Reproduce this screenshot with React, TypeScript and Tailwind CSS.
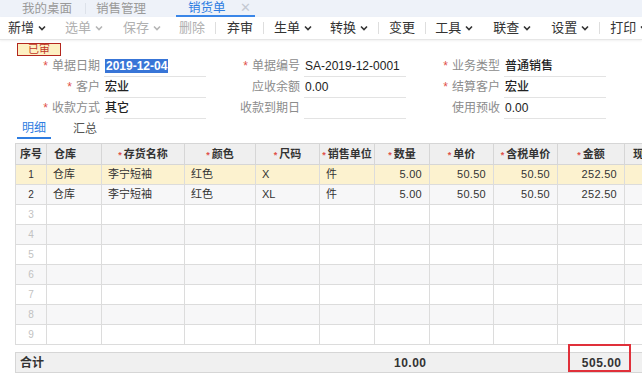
import { Fragment } from 'react'

const cols = [31, 55, 83, 71, 64, 55, 55, 64, 64, 67, 60]

const headers = [
  { label: '序号', req: false, align: 'text-center' },
  { label: '仓库', req: false, align: 'text-left pl-[7px]' },
  { label: '存货名称', req: true, align: 'text-center' },
  { label: '颜色', req: true, align: 'text-center' },
  { label: '尺码', req: true, align: 'text-center' },
  { label: '销售单位', req: true, align: 'text-center' },
  { label: '数量', req: true, align: 'text-center' },
  { label: '单价', req: true, align: 'text-center' },
  { label: '含税单价', req: true, align: 'text-center' },
  { label: '金额', req: true, align: 'text-center' },
  { label: '现存量', req: false, align: 'text-left pl-[8px]' },
]

const rows = [
  ['仓库', '李宁短袖', '红色', 'X', '件', '5.00', '50.50', '50.50', '252.50'],
  ['仓库', '李宁短袖', '红色', 'XL', '件', '5.00', '50.50', '50.50', '252.50'],
]

// toolbar: label, chevron, disabled, separator-before, left margin
const tools = [
  { label: '新增', chev: true, off: false, sep: false, ml: 'ml-[8px]' },
  { label: '选单', chev: true, off: true, sep: false, ml: 'ml-[19px]' },
  { label: '保存', chev: true, off: true, sep: false, ml: 'ml-[20px]' },
  { label: '删除', chev: false, off: true, sep: false, ml: 'ml-[18px]' },
  { label: '弃审', chev: false, off: false, sep: true, ml: 'ml-[11px]' },
  { label: '生单', chev: true, off: false, sep: true, ml: 'ml-[10px]' },
  { label: '转换', chev: true, off: false, sep: false, ml: 'ml-[18px]' },
  { label: '变更', chev: false, off: false, sep: true, ml: 'ml-[10px]' },
  { label: '工具', chev: true, off: false, sep: true, ml: 'ml-[9px]' },
  { label: '联查', chev: true, off: false, sep: false, ml: 'ml-[20px]' },
  { label: '设置', chev: true, off: false, sep: false, ml: 'ml-[20px]' },
  { label: '打印', chev: true, off: false, sep: true, ml: 'ml-[10px]' },
]

const Chevron = ({ muted }: { muted?: boolean }) => (
  <svg width="8" height="6" viewBox="0 0 8 6" className="ml-[4px] shrink-0">
    <path d="M1 1.5l3 3 3-3" fill="none" stroke={muted ? '#b5b5b5' : '#333'} strokeWidth="1.6" />
  </svg>
)

const FormField = ({
  label, value, req, bold, selected,
}: { label: string; value: string; req?: boolean; bold?: boolean; selected?: boolean }) => (
  <div className="flex w-[200px] shrink-0 items-stretch">
    <div className="w-[91px] whitespace-nowrap pr-[4px] text-right text-[12px] leading-[20px] text-[#8c8c8c]">
      {req && <span className="mr-[4px] text-[#e0504a]">*</span>}
      {label}
    </div>
    <div className="w-[102px] whitespace-nowrap border-b border-[#e3e3e3] pl-[1px] text-[12px] leading-[20px] text-[#222]">
      {selected ? (
        <span className="bg-[#3875d7] px-[1px] font-bold text-white">{value}</span>
      ) : (
        <span className={bold ? 'font-medium' : ''}>{value}</span>
      )}
    </div>
  </div>
)

const ColGroup = () => (
  <colgroup>
    {cols.map((w, i) => (
      <col key={i} style={{ width: w }} />
    ))}
  </colgroup>
)

export default function App() {
  return (
    <div className="relative h-[380px] w-[642px] overflow-hidden bg-white font-['Liberation_Sans','Noto_Sans_CJK_SC',sans-serif] text-[#333]">
      {/* ── top tabs ── */}
      <div className="flex h-[17px] items-stretch whitespace-nowrap bg-[#eef2f9] text-[12.5px] leading-[16px]">
        <div className="flex w-[85px] shrink-0 items-center justify-end pr-[13px] text-[#9a9a9a]">我的桌面</div>
        <div className="my-[3px] w-px shrink-0 bg-[#dde2ea]" />
        <div className="flex w-[90px] shrink-0 items-center pl-[10px] text-[#9a9a9a]">销售管理</div>
        <div className="flex w-[79px] shrink-0 items-center border-b-2 border-[#3a86e8] pl-[12px] text-[#2e7de1]">
          销货单
          <span className="ml-[14px] text-[13px] text-[#c4c9d2]">✕</span>
        </div>
      </div>

      {/* ── toolbar ── */}
      <div className="flex h-[23px] items-center whitespace-nowrap border-b border-[#e6e6e6] text-[13px] shadow-[0_1px_2px_rgba(0,0,0,0.06)]">
        {tools.map((t) => (
          <Fragment key={t.label}>
            {t.sep && <div className="ml-[10px] h-[12px] w-px shrink-0 bg-[#dedede]" />}
            <div className={`flex shrink-0 items-center ${t.ml} ${t.off ? 'text-[#b0b0b0]' : 'text-[#333]'}`}>
              {t.label}
              {t.chev && <Chevron muted={t.off} />}
            </div>
          </Fragment>
        ))}
      </div>

      {/* ── status stamp ── */}
      <div className="ml-[17px] mt-[3px] flex h-[13px] w-[44px] items-center justify-center border-[1.5px] border-[#b3261e] bg-[#fdf0c2] text-[11px] leading-none text-[#c0392b]">
        已审
      </div>

      {/* ── header form ── */}
      <div className="pl-[13px]">
        <div className="flex">
          <FormField label="单据日期" value="2019-12-04" req selected />
          <FormField label="单据编号" value="SA-2019-12-0001" req />
          <FormField label="业务类型" value="普通销售" req bold />
        </div>
        <div className="flex">
          <FormField label="客户" value="宏业" req bold />
          <FormField label="应收余额" value="0.00" bold />
          <FormField label="结算客户" value="宏业" req bold />
        </div>
        <div className="flex">
          <FormField label="收款方式" value="其它" req bold />
          <FormField label="收款到期日" value="" />
          <FormField label="使用预收" value="0.00" bold />
        </div>
      </div>

      {/* ── detail tabs ── */}
      <div className="ml-[17px] flex h-[20px] items-stretch text-[12px]">
        <div className="flex w-[34px] items-center justify-center border-b-2 border-[#2e7de1] text-[#2e7de1]">明细</div>
        <div className="ml-[22px] flex items-center text-[#555]">汇总</div>
      </div>

      {/* ── grid ── */}
      <table className="ml-[15px] mt-[4px] table-fixed border-collapse text-[11px]" style={{ width: 669 }}>
        <ColGroup />
        <thead>
          <tr className="h-[21px] bg-[#efefef]">
            {headers.map((h) => (
              <th key={h.label} className={`border border-[#d6d6d6] p-0 font-bold text-[#333] whitespace-nowrap ${h.align}`}>
                {h.req && <span className="mr-[2px] text-[9px] text-[#e0504a]">*</span>}
                {h.label}
              </th>
            ))}
          </tr>
        </thead>
        <tbody>
          {Array.from({ length: 9 }).map((_, i) => {
            const r = rows[i]
            const bg = i === 0 ? 'bg-[#fcf2cf]' : i % 2 === 1 ? 'bg-[#f7f7f8]' : 'bg-white'
            return (
              <tr key={i} className={`h-[20px] ${bg}`}>
                <td className={`border border-[#dcdcdc] p-0 text-center text-[10px] ${r ? 'text-[#333]' : 'text-[#c2c2c2]'}`}>
                  {i + 1}
                </td>
                {Array.from({ length: 10 }).map((__, j) => {
                  const v = r ? r[j] ?? '' : ''
                  const num = j >= 5
                  return (
                    <td
                      key={j}
                      className={`border border-[#dcdcdc] p-0 whitespace-nowrap ${num ? 'pr-[7px] text-right text-[11px] tracking-[0.3px]' : 'pl-[6px] text-left'} text-[#333]`}
                    >
                      {v}
                    </td>
                  )
                })}
              </tr>
            )
          })}
        </tbody>
      </table>

      {/* ── totals ── */}
      <table className="ml-[15px] mt-[7px] table-fixed border-collapse text-[12px]" style={{ width: 669 }}>
        <ColGroup />
        <tbody>
          <tr className="h-[20px] border border-[#d6d6d6] bg-[#f0f0f0] font-bold text-[#333]">
            <td colSpan={2} className="p-0 pl-[4px]">合计</td>
            <td colSpan={4} className="p-0" />
            <td className="p-0 pr-[3px] text-right tracking-[0.5px]">10.00</td>
            <td colSpan={2} className="p-0" />
            <td className="p-0 pr-[3px] text-right tracking-[0.5px]">505.00</td>
            <td className="p-0" />
          </tr>
        </tbody>
      </table>

      {/* annotation box */}
      <div className="absolute left-[568px] top-[344px] h-[28px] w-[63px] border-2 border-[#e0303a]" />
    </div>
  )
}
